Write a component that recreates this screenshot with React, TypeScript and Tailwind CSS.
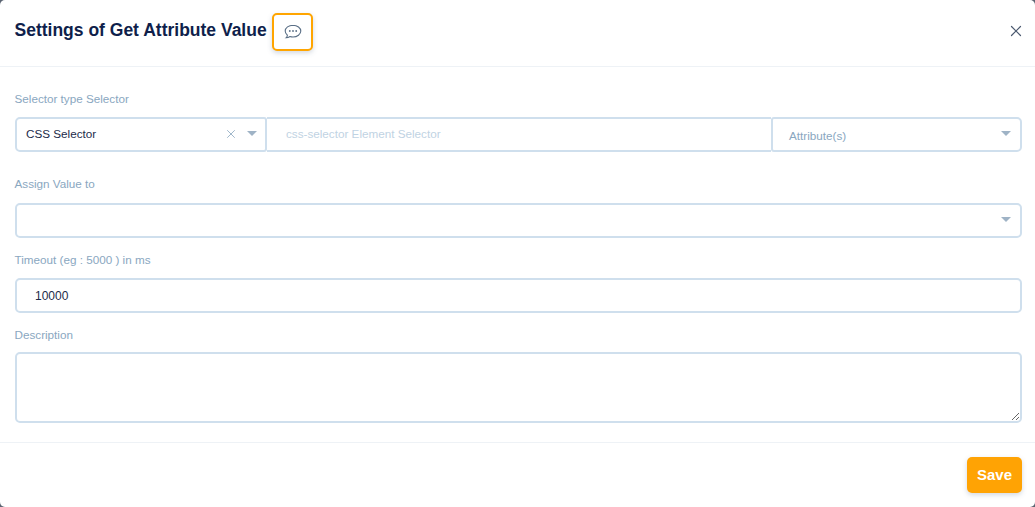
import React from "react";
import { X } from "lucide-react";

const labelCls = "block text-[11.7px] leading-[18px] text-[#8aa7bf] ml-[-0.5px]";
const boxCls = "h-[35px] border-2 border-[#cfdfed] bg-white";

function Caret() {
  return (
    <span className="w-0 h-0 mb-[2px] border-x-[5px] border-x-transparent border-t-[5px] border-t-[#9fb3c6]" />
  );
}

function ChatIcon() {
  return (
    <svg width="18" height="16" viewBox="0 0 18 16" fill="none" stroke="#5a6f86" strokeWidth="1.1">
      <path d="M9 1.2c-4.3 0-7.800 2.600-7.800 5.900 0 1.600.8 3 2.200 4.100-.1 1-.6 2-1.300 2.600 1.400 0 2.800-.5 3.900-1.300.9.3 2 .5 3 .5 4.300 0 7.800-2.700 7.800-5.900S13.300 1.200 9 1.200z" />
      <circle cx="5.800" cy="7" r=".9" fill="#5a6f86" stroke="none" />
      <circle cx="9" cy="7" r=".9" fill="#5a6f86" stroke="none" />
      <circle cx="12.200" cy="7" r=".9" fill="#5a6f86" stroke="none" />
    </svg>
  );
}

export default function App() {
  return (
    <div className="h-[507px] w-[1035px] bg-[#5b6472] font-['Liberation_Sans',Arial,sans-serif] overflow-hidden">
      <div className="h-full bg-white rounded-[5px] flex flex-col">
        <div className="h-[67px] shrink-0 border-b border-[#eef2f6] flex items-center pl-[14.5px] pr-[10px] pb-[4px]">
          <h1 className="text-[17.5px] font-bold text-[#0f1f4b] leading-none">
            Settings of Get Attribute Value
          </h1>
          <button className="ml-[5.500px] mt-[2px] w-[41px] h-[38px] rounded-[5px] border-2 border-[#ffa500] bg-white shadow-[0_2px_5px_rgba(80,100,130,0.25)] flex items-center justify-center">
            <ChatIcon />
          </button>
          <button className="ml-auto text-[#4c5a70]">
            <X size={18} strokeWidth={1.6} />
          </button>
        </div>

        <div className="flex-1 pl-[15px] pr-[13px]">
          <label className={`${labelCls} mt-[23px]`}>Selector type Selector</label>
          <div className="flex mt-[9px]">
            <div className={`${boxCls} w-[252px] rounded-l-[5px] rounded-r-[3px] flex items-center pl-[9px] pr-[8px]`}>
              <span className="text-[11.7px] text-[#1c2b4a] flex-1 mb-[2px]">CSS Selector</span>
              <X size={14} strokeWidth={1.400} className="text-[#8aa7bf] mr-[9px] mt-[-2px]" />
              <Caret />
            </div>
            <div className={`${boxCls} flex-1 border-x-0 flex items-center pl-[19px]`}>
              <span className="text-[11.7px] text-[#bfd3e3] mb-[2px]">css-selector Element Selector</span>
            </div>
            <div className={`${boxCls} w-[251px] rounded-r-[5px] rounded-l-[3px] flex items-center pl-[16px] pr-[9px]`}>
              <span className="text-[11.7px] text-[#8aa7bf] flex-1 mt-[2px]">Attribute(s)</span>
              <Caret />
            </div>
          </div>

          <label className={`${labelCls} mt-[23px]`}>Assign Value to</label>
          <div className={`${boxCls} mt-[10px] rounded-[5px] flex items-center justify-end pr-[9px]`}>
            <Caret />
          </div>

          <label className={`${labelCls} mt-[13px]`}>Timeout (eg : 5000 ) in ms</label>
          <div className={`${boxCls} mt-[9px] rounded-[5px] flex items-center pl-[18px]`}>
            <span className="text-[12px] text-[#1c2b4a]">10000</span>
          </div>

          <label className={`${labelCls} mt-[13px]`}>Description</label>
          <textarea className="block w-full h-[71px] mt-[8px] border-2 border-[#cfdfed] rounded-[5px] bg-white outline-none" />
        </div>

        <div className="h-[65px] shrink-0 border-t border-[#eef2f6] flex justify-end items-start pt-[14px] pr-[13px]">
          <button className="w-[55px] h-[36px] rounded-[5px] bg-[#ffa304] text-white text-[15px] font-bold shadow-[0_2px_5px_rgba(80,100,130,0.25)]">
            Save
          </button>
        </div>
      </div>
    </div>
  );
}
